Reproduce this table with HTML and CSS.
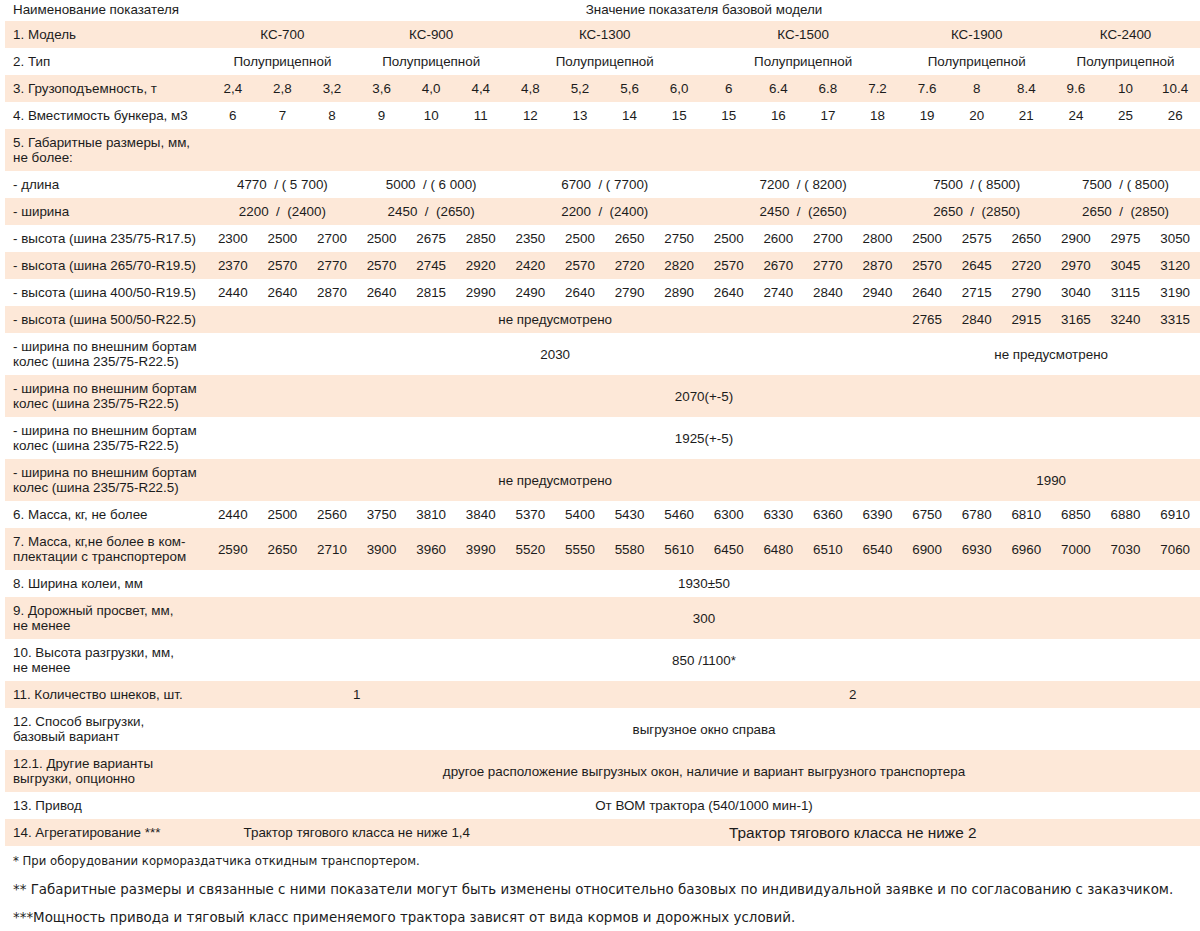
FILE: index.html
```html
<!DOCTYPE html>
<html lang="ru">
<head>
<meta charset="utf-8">
<title>Технические характеристики</title>
<link rel="stylesheet" href="styles.css">
</head>
<body>
<table class="spec">
<colgroup><col class="c-label"><col span="20"></colgroup>
<thead>
<tr class="head"><th class="lbl">Наименование показателя</th><th colspan="20">Значение показателя базовой модели</th></tr>
</thead>
<tbody>
<tr><td class="lbl">1. Модель</td><td colspan="3">КС-700</td><td colspan="3">КС-900</td><td colspan="4">КС-1300</td><td colspan="4">КС-1500</td><td colspan="3">КС-1900</td><td colspan="3">КС-2400</td></tr>
<tr><td class="lbl">2. Тип</td><td colspan="3">Полуприцепной</td><td colspan="3">Полуприцепной</td><td colspan="4">Полуприцепной</td><td colspan="4">Полуприцепной</td><td colspan="3">Полуприцепной</td><td colspan="3">Полуприцепной</td></tr>
<tr><td class="lbl">3. Грузоподъемность, т</td><td>2,4</td><td>2,8</td><td>3,2</td><td>3,6</td><td>4,0</td><td>4,4</td><td>4,8</td><td>5,2</td><td>5,6</td><td>6,0</td><td>6</td><td>6.4</td><td>6.8</td><td>7.2</td><td>7.6</td><td>8</td><td>8.4</td><td>9.6</td><td>10</td><td>10.4</td></tr>
<tr><td class="lbl">4. Вместимость бункера, м3</td><td>6</td><td>7</td><td>8</td><td>9</td><td>10</td><td>11</td><td>12</td><td>13</td><td>14</td><td>15</td><td>15</td><td>16</td><td>17</td><td>18</td><td>19</td><td>20</td><td>21</td><td>24</td><td>25</td><td>26</td></tr>
<tr><td class="lbl">5. Габаритные размеры, мм,<br>не более:</td><td colspan="20"></td></tr>
<tr><td class="lbl">- длина</td><td colspan="3">4770&nbsp; / ( 5 700)</td><td colspan="3">5000&nbsp; / ( 6 000)</td><td colspan="4">6700&nbsp; / ( 7700)</td><td colspan="4">7200&nbsp; / ( 8200)</td><td colspan="3">7500&nbsp; / ( 8500)</td><td colspan="3">7500&nbsp; / ( 8500)</td></tr>
<tr><td class="lbl">- ширина</td><td colspan="3">2200&nbsp; /&nbsp; (2400)</td><td colspan="3">2450&nbsp; /&nbsp; (2650)</td><td colspan="4">2200&nbsp; /&nbsp; (2400)</td><td colspan="4">2450&nbsp; /&nbsp; (2650)</td><td colspan="3">2650&nbsp; /&nbsp; (2850)</td><td colspan="3">2650&nbsp; /&nbsp; (2850)</td></tr>
<tr><td class="lbl">- высота (шина 235/75-R17.5)</td><td>2300</td><td>2500</td><td>2700</td><td>2500</td><td>2675</td><td>2850</td><td>2350</td><td>2500</td><td>2650</td><td>2750</td><td>2500</td><td>2600</td><td>2700</td><td>2800</td><td>2500</td><td>2575</td><td>2650</td><td>2900</td><td>2975</td><td>3050</td></tr>
<tr><td class="lbl">- высота (шина 265/70-R19.5)</td><td>2370</td><td>2570</td><td>2770</td><td>2570</td><td>2745</td><td>2920</td><td>2420</td><td>2570</td><td>2720</td><td>2820</td><td>2570</td><td>2670</td><td>2770</td><td>2870</td><td>2570</td><td>2645</td><td>2720</td><td>2970</td><td>3045</td><td>3120</td></tr>
<tr><td class="lbl">- высота (шина 400/50-R19.5)</td><td>2440</td><td>2640</td><td>2870</td><td>2640</td><td>2815</td><td>2990</td><td>2490</td><td>2640</td><td>2790</td><td>2890</td><td>2640</td><td>2740</td><td>2840</td><td>2940</td><td>2640</td><td>2715</td><td>2790</td><td>3040</td><td>3115</td><td>3190</td></tr>
<tr><td class="lbl">- высота (шина 500/50-R22.5)</td><td colspan="14">не предусмотрено</td><td>2765</td><td>2840</td><td>2915</td><td>3165</td><td>3240</td><td>3315</td></tr>
<tr><td class="lbl">- ширина по внешним бортам<br>колес (шина 235/75-R22.5)</td><td colspan="14">2030</td><td colspan="6">не предусмотрено</td></tr>
<tr><td class="lbl">- ширина по внешним бортам<br>колес (шина 235/75-R22.5)</td><td colspan="20">2070(+-5)</td></tr>
<tr><td class="lbl">- ширина по внешним бортам<br>колес (шина 235/75-R22.5)</td><td colspan="20">1925(+-5)</td></tr>
<tr><td class="lbl">- ширина по внешним бортам<br>колес (шина 235/75-R22.5)</td><td colspan="14">не предусмотрено</td><td colspan="6">1990</td></tr>
<tr><td class="lbl">6. Масса, кг, не более</td><td>2440</td><td>2500</td><td>2560</td><td>3750</td><td>3810</td><td>3840</td><td>5370</td><td>5400</td><td>5430</td><td>5460</td><td>6300</td><td>6330</td><td>6360</td><td>6390</td><td>6750</td><td>6780</td><td>6810</td><td>6850</td><td>6880</td><td>6910</td></tr>
<tr><td class="lbl">7. Масса, кг,не более в ком-<br>плектации с транспортером</td><td>2590</td><td>2650</td><td>2710</td><td>3900</td><td>3960</td><td>3990</td><td>5520</td><td>5550</td><td>5580</td><td>5610</td><td>6450</td><td>6480</td><td>6510</td><td>6540</td><td>6900</td><td>6930</td><td>6960</td><td>7000</td><td>7030</td><td>7060</td></tr>
<tr><td class="lbl">8. Ширина колеи, мм</td><td colspan="20">1930±50</td></tr>
<tr><td class="lbl">9. Дорожный просвет, мм,<br>не менее</td><td colspan="20">300</td></tr>
<tr><td class="lbl">10. Высота разгрузки, мм,<br>не менее</td><td colspan="20">850 /1100*</td></tr>
<tr><td class="lbl">11. Количество шнеков, шт.</td><td colspan="6">1</td><td colspan="14">2</td></tr>
<tr><td class="lbl">12. Способ выгрузки,<br>базовый вариант</td><td colspan="20">выгрузное окно справа</td></tr>
<tr><td class="lbl">12.1. Другие варианты<br>выгрузки, опционно</td><td colspan="20">другое расположение выгрузных окон, наличие и вариант выгрузного транспортера</td></tr>
<tr><td class="lbl">13. Привод</td><td colspan="20">От ВОМ трактора (540/1000 мин-1)</td></tr>
<tr><td class="lbl">14. Агрегатирование ***</td><td colspan="6">Трактор тягового класса не ниже 1,4</td><td colspan="14" class="big">Трактор тягового класса не ниже 2</td></tr>
</tbody>
</table>
<div class="notes">
<p class="note small">* При оборудовании кормораздатчика откидным транспортером.</p>
<p class="note">** Габаритные размеры и связанные с ними показатели могут быть изменены относительно базовых по индивидуальной заявке и по согласованию с заказчиком.</p>
<p class="note">***Мощность привода и тяговый класс применяемого трактора зависят от вида кормов и дорожных условий.</p>
</div>
</body>
</html>
```
FILE: styles.css
```css
html, body {
  margin: 0;
  padding: 0;
  background: #ffffff;
}
body {
  font-family: "Liberation Sans", Arial, sans-serif;
  color: #1c1c1c;
  width: 1200px;
}
.spec {
  margin-left: 5px;
  width: 1195px;
  border-collapse: collapse;
  table-layout: fixed;
  font-size: 13.4px;
  line-height: 15px;
}
.c-label {
  width: 203px;
}
.spec th,
.spec td {
  padding: 6px 0;
  text-align: center;
  vertical-align: middle;
  font-weight: 400;
  white-space: nowrap;
}
.spec .lbl {
  text-align: left;
  padding-left: 8px;
}
.head th {
  padding: 2px 0 4px;
}
.spec tbody tr:nth-child(odd) {
  background: #fde8d8;
}
.spec td.big {
  font-size: 15.4px;
}
.notes {
  padding: 1px 0 0 13px;
}
.note {
  margin: 0;
  height: 28px;
  line-height: 28px;
  font-family: "DejaVu Sans Condensed", "Roboto", sans-serif;
  font-stretch: condensed;
  font-size: 14.9px;
  white-space: nowrap;
}
.note.small {
  font-size: 13px;
}
```
